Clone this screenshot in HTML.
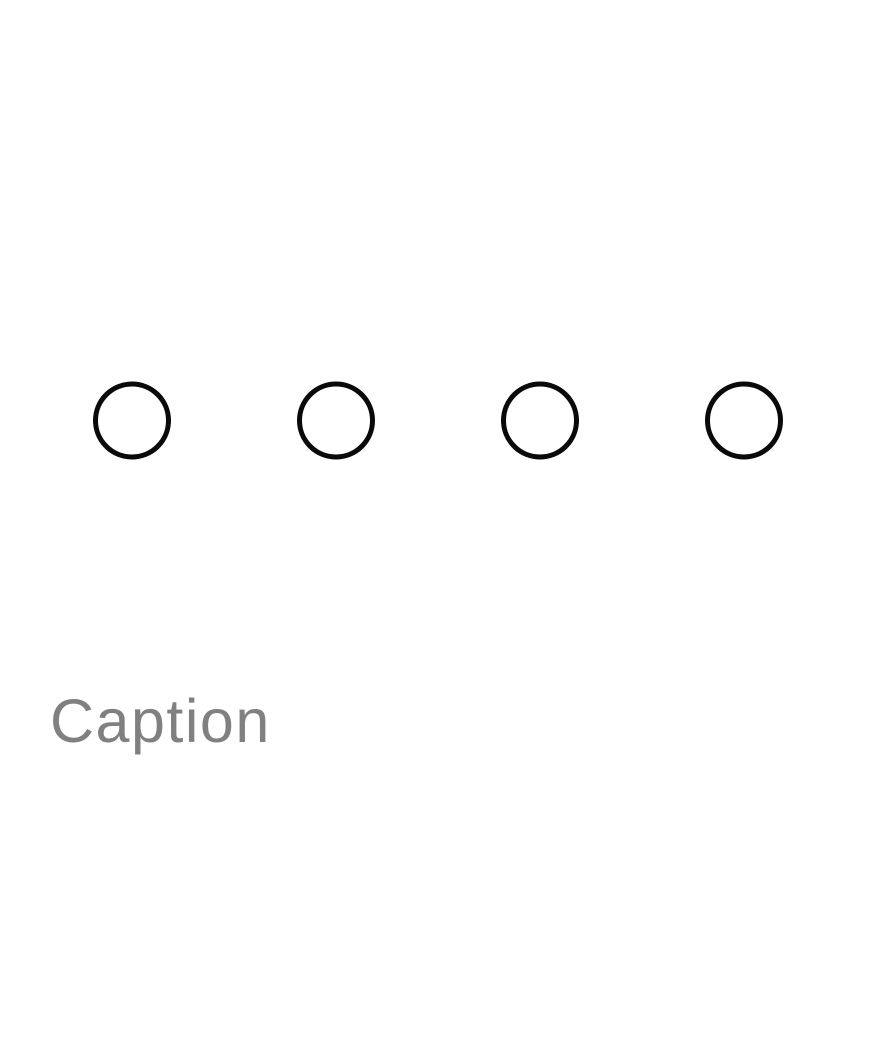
<!DOCTYPE html>
<html><head><style>
html,body{margin:0;padding:0;background:#fff;width:877px;height:1040px;overflow:hidden;position:relative}
</style></head><body>
<svg width="877" height="1040" style="position:absolute;left:0;top:0">
<g fill="none" stroke="#0a0a0a" stroke-width="5">
<circle cx="132" cy="420.5" r="36.5"/>
<circle cx="336" cy="420.5" r="36.5"/>
<circle cx="540" cy="420.5" r="36.5"/>
<circle cx="744" cy="420.5" r="36.5"/>
</g>
<text x="50" y="742" font-family="Liberation Sans, sans-serif" font-size="61" fill="#808080" letter-spacing="1.5">Caption</text>
</svg>
</body></html>
